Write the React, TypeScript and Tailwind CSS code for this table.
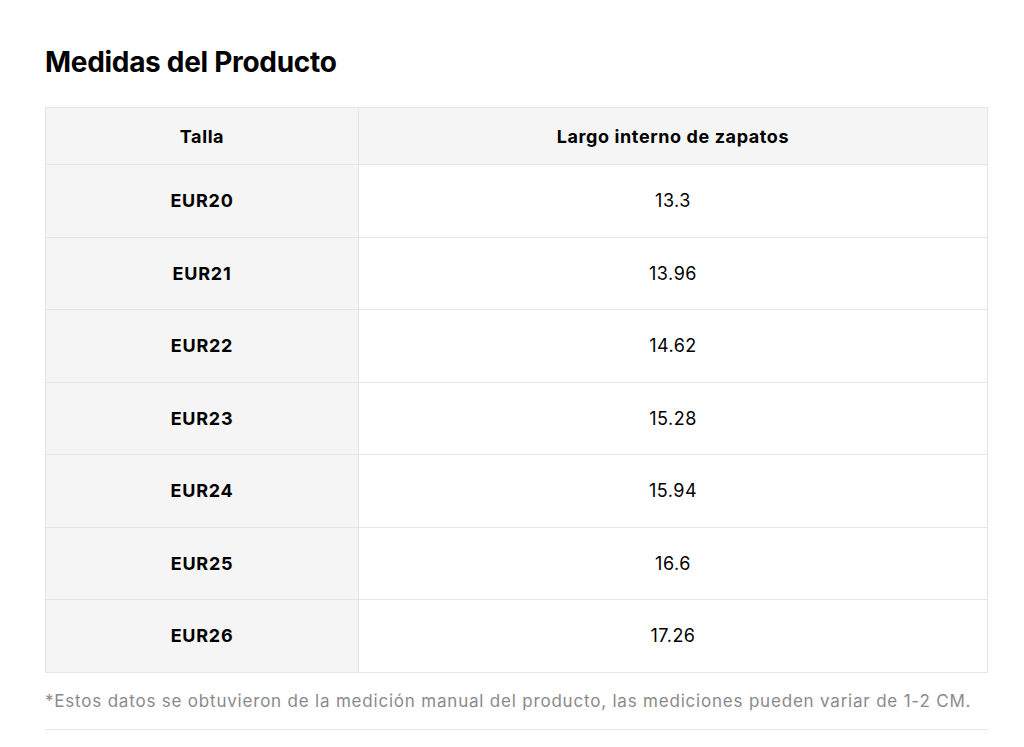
import React from 'react';

const rows = [
  ['EUR20', '13.3'],
  ['EUR21', '13.96'],
  ['EUR22', '14.62'],
  ['EUR23', '15.28'],
  ['EUR24', '15.94'],
  ['EUR25', '16.6'],
  ['EUR26', '17.26'],
];

export default function App() {
  return (
    <div className="min-h-[747px] bg-white px-[45px] pt-[44px] font-['Inter',sans-serif] text-black">
      <h2 className="text-[28px] font-bold leading-[36px] tracking-[-0.3px]">Medidas del Producto</h2>

      <table className="mt-[27px] w-[943px] border-collapse border border-[#e5e5e5] text-[18px]">
        <thead>
          <tr className="h-[57px] bg-[#f5f5f5]">
            <th className="w-[313px] border border-[#e5e5e5] font-bold tracking-[0.6px]">Talla</th>
            <th className="border border-[#e5e5e5] font-bold tracking-[0.6px]">Largo interno de zapatos</th>
          </tr>
        </thead>
        <tbody>
          {rows.map(([size, len]) => (
            <tr key={size} className="h-[72.5px]">
              <td className="border border-[#e5e5e5] bg-[#f5f5f5] text-center font-bold tracking-[0.75px]">{size}</td>
              <td className="border border-[#e5e5e5] text-center tracking-[0.5px]">{len}</td>
            </tr>
          ))}
        </tbody>
      </table>

      <p className="mt-[15px] text-[17px] leading-[26px] tracking-[0.8px] text-[#8a8a8a]">
        *Estos datos se obtuvieron de la medición manual del producto, las mediciones pueden variar de 1-2 CM.
      </p>
      <div className="mt-[15px] h-px w-[943px] bg-[#e5e5e5]" />
    </div>
  );
}
